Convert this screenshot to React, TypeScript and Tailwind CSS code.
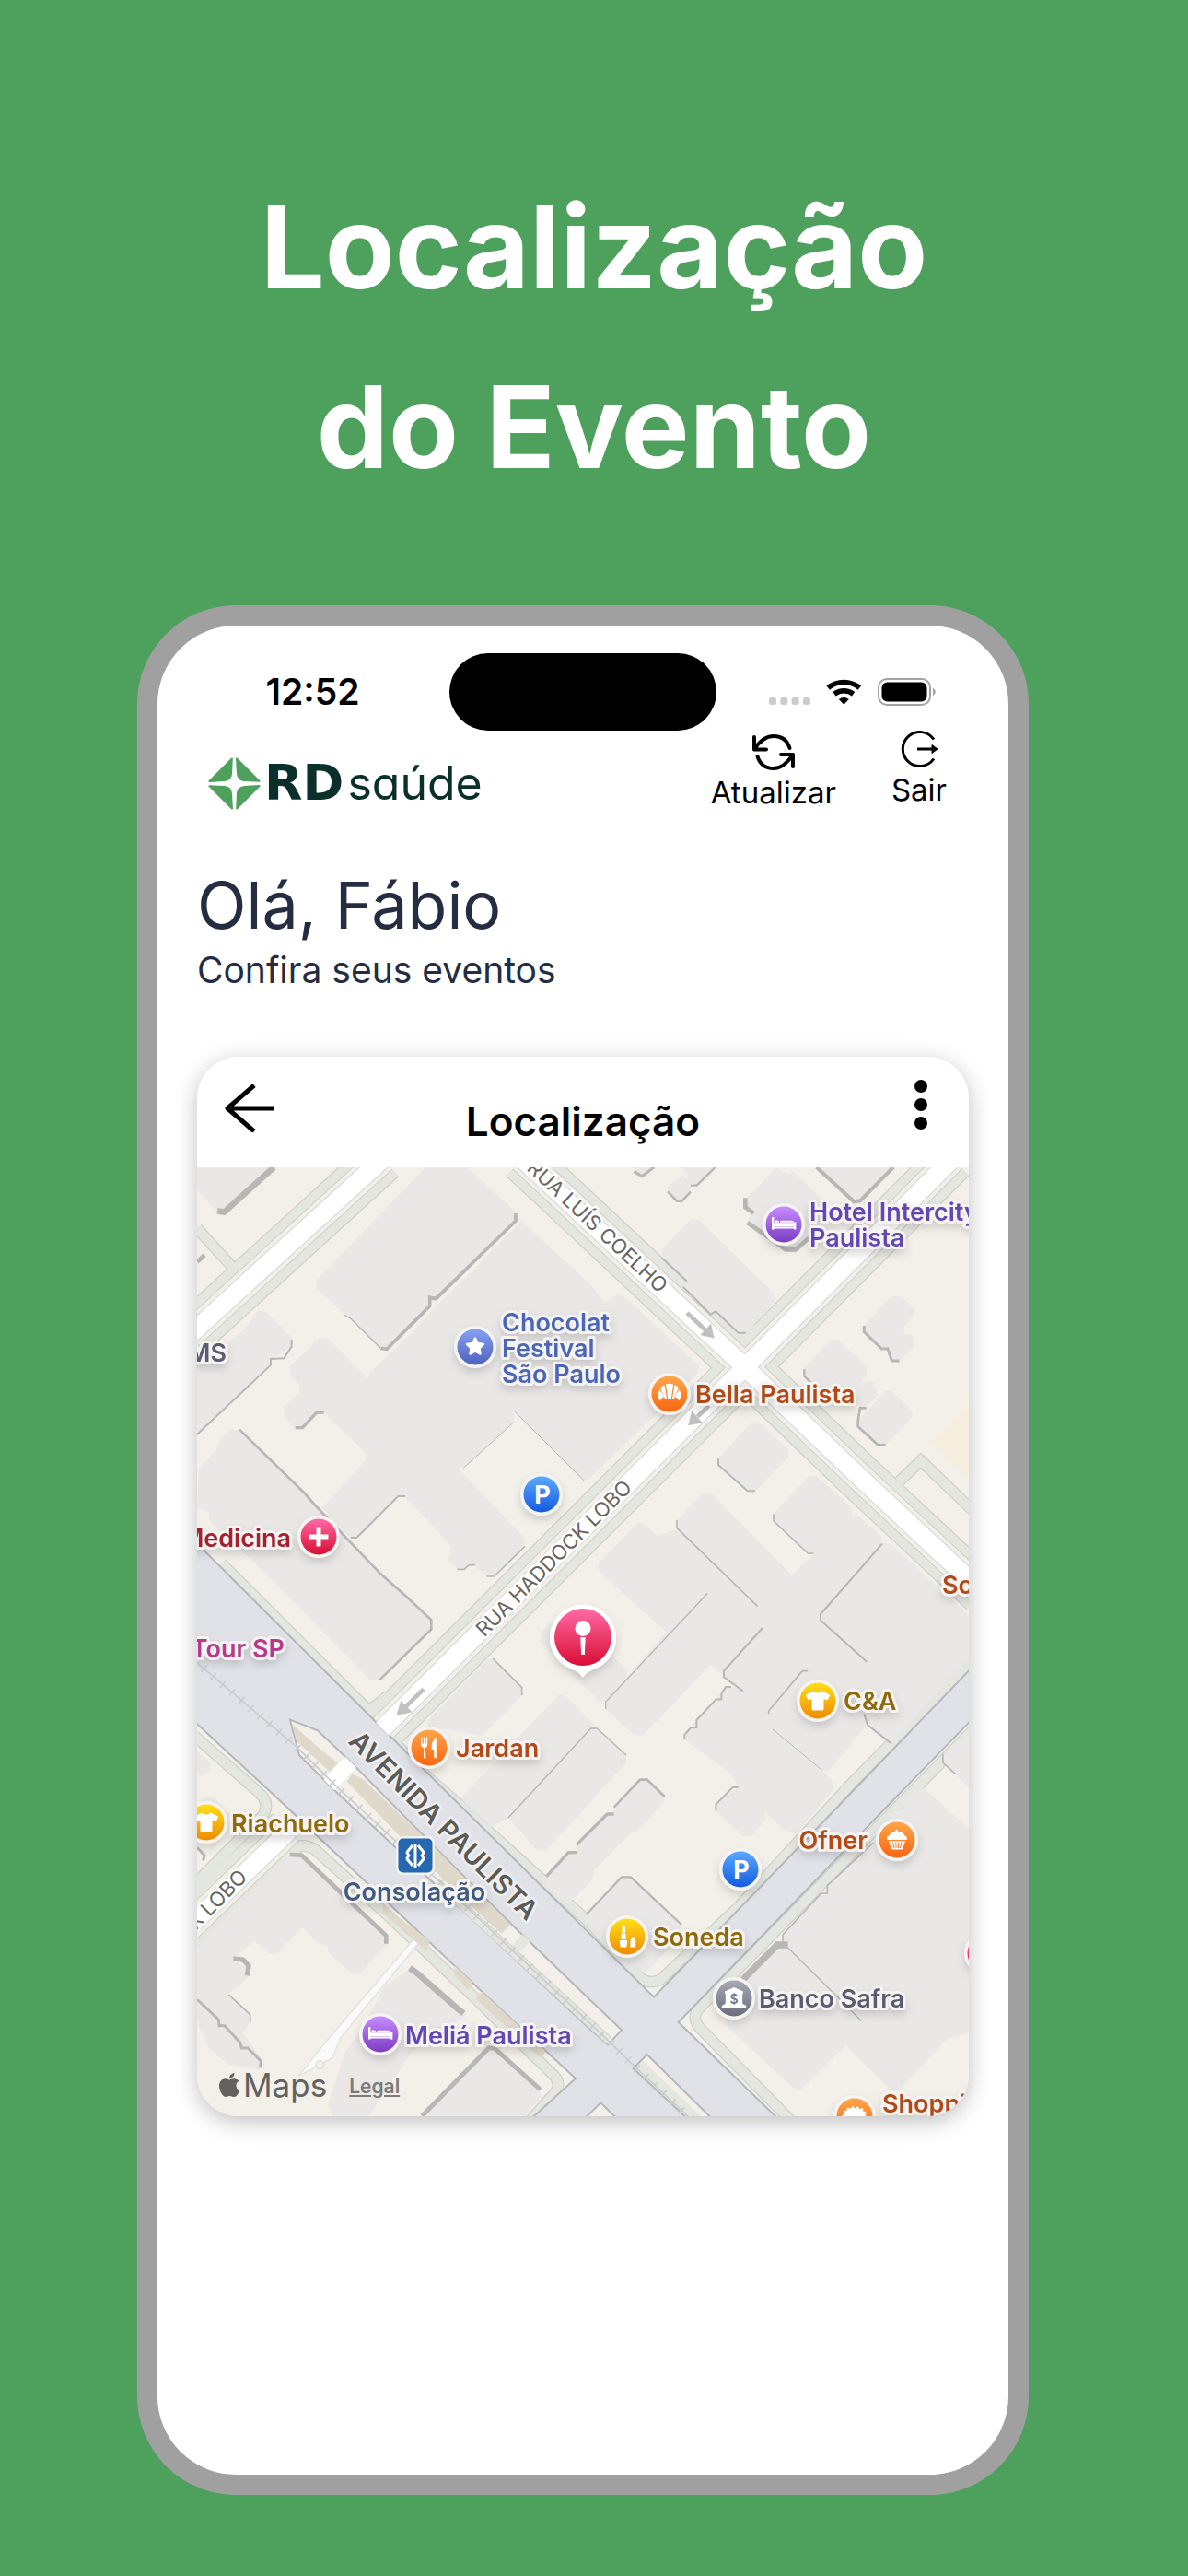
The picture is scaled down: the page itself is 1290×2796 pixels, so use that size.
import type { ReactNode } from 'react';
import { FaApple, FaStar, FaTshirt } from 'react-icons/fa';

type PinKind = 'blue' | 'purple' | 'orange' | 'red' | 'yellow' | 'parking' | 'gray';

interface Place {
  x: number;
  y: number;
  kind: PinKind;
  glyph: ReactNode;
  labelX?: number;
  labelY?: number;
  lines?: string[];
  anchor?: 'start' | 'end';
}

const pinColors: Record<PinKind, [string, string, string]> = {
  blue: ['#84a0f2', '#4e62c0', '#4b66b8'],
  purple: ['#c78bff', '#7b3cc4', '#6347b5'],
  orange: ['#ffa64a', '#fb6510', '#b24a17'],
  red: ['#ff6aa5', '#d80d33', '#a3202e'],
  yellow: ['#ffdf1a', '#ee8b00', '#8f6a0c'],
  parking: ['#5aa9ff', '#145ae0', '#145ae0'],
  gray: ['#a5a8b5', '#6b6d7c', '#5a5c72'],
};

const BedGlyph = () => (
  <g fill="#fff">
    <path d="M-13-8h2.400v10.500h21.200v-5H13.400V5.500H11V4.500h-21.600v1H-13z" />
    <path d="M-9.500-4.500h3a1.500 1.500 0 0 1 1.500 1.500v.8h-4.500zM-4-2.200c0-1.500.5-2 2-2H8.500c1.500 0 2.500.8 2.500 2z" />
    <path d="M-11-1.800h23v4h-23z" />
  </g>
);

const CroissantGlyph = () => (
  <g fill="#fff">
    <path d="M-4-10.500q4-1.500 8 0L1.800 6h-3.600z" />
    <path d="M-5.500-9.800-2.800 6h-1.800L-10-6.500q1.500-2.300 4.500-3.300z" />
    <path d="M5.500-9.800 2.800 6h1.800L10-6.500q-1.500-2.300-4.500-3.300z" />
    <path d="M-10.700-5-5.800 3q-3 1.400-4.600 4.200-3.800-5-.3-12.200z" />
    <path d="M10.700-5 5.800 3q3 1.400 4.600 4.200 3.800-5 .3-12.200z" />
  </g>
);

const ForkGlyph = () => (
  <g fill="#fff">
    <path d="M-9-11.500h1.400v7h1.400v-7h1.600v7h1.400v-7h1.400v8q0 2.500-2.300 3.500l.5 11.200h-2.500L-5.600 0Q-9-.8-9-3.500z" />
    <path d="M7.800-11.500v22.700H5.300L5.100 2H2.600q-.4-11 5.200-13.500z" />
  </g>
);

const CupcakeGlyph = () => (
  <g>
    <path d="M-10.500 0q-1.500-4 2.300-4.800Q-7-8.600-2.200-8.400L-.8-11.500 2.200-8.400Q7-8.600 8-4.800 12-4 10.500 0z" fill="#fff" />
    <path d="M-9 1.200H9L5.800 10.500H-5.800z" fill="#fff" />
    <path d="M-4.500 2.500-3 9M-1.200 2.500l.3 6.500M1.800 2.500 1.500 9M5 2.500 3.500 9" stroke="#fb7a22" />
  </g>
);

const LipstickGlyph = () => (
  <g fill="#fff">
    <path d="M-5.500-4v-6q.4-2.300 2-2.600L-2-10v6z" />
    <path d="M-6.500-3.200h5V3h-5zM-8 4h8v3L-.8 11.500h-6.500L-8 7zM3.500 11.500V4.500q2.800-8.500 5.800 0v7z" />
  </g>
);

const BankGlyph = () => (
  <g>
    <path d="M-10-7.500 0-12l10 4.500v2.300H9.200v11l4 2.200v2h-26.400v-2l4-2.200v-11H-10z" fill="#fff" />
    <text y="6" textAnchor="middle" className="fill-[#777988] text-[14px] font-semibold">$</text>
  </g>
);

const ParkingGlyph = () => (
  <text x="1" y="10" textAnchor="middle" className="fill-white text-[27px] font-bold">P</text>
);

const places: Place[] = [
  { x: 302, y: 195, kind: 'blue', glyph: <FaStar x="-11" y="-12" size={22} color="#fff" />, labelX: 331, labelY: 178, lines: ['Chocolat', 'Festival', 'São Paulo'] },
  { x: 637, y: 62, kind: 'purple', glyph: <BedGlyph />, labelX: 665, labelY: 58, lines: ['Hotel Intercity', 'Paulista'] },
  { x: 513, y: 246, kind: 'orange', glyph: <CroissantGlyph />, labelX: 541, labelY: 256, lines: ['Bella Paulista'] },
  { x: 374, y: 355, kind: 'parking', glyph: <ParkingGlyph /> },
  { x: 132, y: 401, kind: 'red', glyph: <path d="M0-10.500v21M-10.500 0h21" stroke="#fff" strokeWidth="5" />, labelX: 102, labelY: 412, lines: ['Medicina'], anchor: 'end' },
  { x: 674, y: 579, kind: 'yellow', glyph: <FaTshirt x="-13" y="-13" size={26} color="#fff" />, labelX: 702, labelY: 589, lines: ['C&A'] },
  { x: 252, y: 630, kind: 'orange', glyph: <ForkGlyph />, labelX: 281, labelY: 640, lines: ['Jardan'] },
  { x: 10, y: 711, kind: 'yellow', glyph: <FaTshirt x="-13" y="-13" size={26} color="#fff" />, labelX: 37, labelY: 722, lines: ['Riachuelo'] },
  { x: 199, y: 941, kind: 'purple', glyph: <BedGlyph />, labelX: 226, labelY: 952, lines: ['Meliá Paulista'] },
  { x: 760, y: 730, kind: 'orange', glyph: <CupcakeGlyph />, labelX: 728, labelY: 740, lines: ['Ofner'], anchor: 'end' },
  { x: 590, y: 762, kind: 'parking', glyph: <ParkingGlyph /> },
  { x: 467, y: 835, kind: 'yellow', glyph: <LipstickGlyph />, labelX: 495, labelY: 845, lines: ['Soneda'] },
  { x: 583, y: 902, kind: 'gray', glyph: <BankGlyph />, labelX: 610, labelY: 912, lines: ['Banco Safra'] },
  { x: 714, y: 1030, kind: 'orange', glyph: <path d="M-12 2q0-11 12-11t12 11z" fill="#fff" stroke="#fff" strokeWidth="3" strokeDasharray="3 2" />, labelX: 744, labelY: 1026, lines: ['Shopping'] },
  { x: 856, y: 853, kind: 'red', glyph: null },
];

const streets = [
  'M-30 551 605-27',
  'M1060-27 1785 651 2148 999 2560 1384',
  'M2460-27 1785 651 603 1829',
  'M-40 2487 300 2160',
];

const sidewalks = [
  'M0 199 115 325',
  'M80 1290 555 1765Q570 1765 620 1722',
  'M655 1872 650 1880 738 1974 858 2079 1278 2459 1450 2645Q1480 2660 1510 2645L1758 2414 2128 2010 2530 1603',
  'M2530 1830 1640 2735Q1605 2765 1640 2805L1940 3110',
  'M-10 1850 200 2035Q240 2070 215 2110L-10 2336',
  'M-10 2544 290 2222Q340 2195 385 2222L620 2435 900 2700 1165 2960Q1190 2990 1160 3020L1080 3110',
  'M2285 1025 2358 955 2530 1120',
  'M1740 490Q1775 560 1840 520',
];

const buildings = [
  '0,0 250,0 85,140 65,140 0,75',
  '743,0 878,0 1038,144 1038,174 778,424 758,449 618,589 598,589 388,394 388,369',
  '1058,174 1278,379 1328,439 1378,409 1633,644 1633,669 1273,1019 1253,1019 1033,794 1033,829 868,979 848,979 1068,1209 1068,1234 968,1332 943,1332 903,1294 848,1309 818,1279 828,1234 678,1074 653,1069 518,1206 498,1206 408,1109 548,954 548,929 413,799 388,799 343,849 318,849 283,809 283,779 333,734 333,709 303,674 303,649 398,554 423,554 558,689 563,669 703,534 758,474',
  '0,650 148,534 198,469 223,469 308,554 308,584 243,624 238,644 0,870',
  '6,979 68,914 73,889 108,854 138,854 348,1059 388,1104 598,1324 678,1394 763,1474 763,1504 593,1669 563,1669 358,1459 188,1289 38,1149 38,1124 0,1109',
  '1513,269 1608,169 1633,169 1883,414 1883,439 1788,539 1763,539 1688,469 1673,479 1583,389 1596,371 1513,294',
  '1783,109 1888,0 1928,24 1943,14 2028,94 2028,200 1958,269 1918,269 1793,174 1813,144 1783,129',
  '2018,0 2268,0 2158,109 2138,109',
  '1533,64 1583,24 1608,49 1608,74 1578,109 1563,109 1533,79',
  '1583,0 1688,0 1628,59 1608,59',
  '1423,0 1488,0 1453,29 1428,24',
  '2173,514 2263,419 2293,419 2338,459 2338,479 2303,519 2303,544 2328,544 2338,559 2338,584 2288,629 2263,629 2248,589 2228,589 2173,534',
  '1978,654 2063,562 2088,562 2181,649 2181,679 2090,770 1978,679',
  '2150,700 2200,697 2218,740 2180,784 2163,784 2130,750',
  '2153,824 2243,729 2263,729 2330,794 2330,814 2243,904 2218,904 2153,844',
  '1698,949 1808,829 1828,829 1926,919 1926,944 1818,1054 1793,1054 1698,969',
  '1308,1289 1433,1159 1453,1159 1498,1199 1563,1179 1563,1149 1648,1061 1673,1061 1938,1329 2008,1259 1988,1259 1878,1154 1878,1129 1993,1004 2018,1004 2133,1109 2133,1134 2158,1137 2230,1204 2230,1224 2258,1224 2514,1459 2514,1599 2258,1874 2183,1814 2058,1964 2038,1964 2070,1999 2070,2029 1953,2169 1918,2164 1848,2099 1853,2124 1803,2179 1778,2179 1688,2094 1688,2069 1763,2019 1738,1974 1588,1864 1588,1844 1628,1799 1728,1689 1778,1699 1718,1659 1673,1619 1453,1849 1423,1849 1331,1764 1331,1739 1528,1514 1308,1314',
  '1118,1520 1150,1480 1300,1540 1403,1639 1403,1660 1330,1739 1310,1739 1118,1545',
  '753,1799 948,1599 963,1599 1058,1694 1058,1719 930,1850 753,1820',
  '863,2049 1178,1719 1198,1719 1278,1799 1303,1827 1398,1914 1398,1939 1138,2224 1108,2224 1013,2119 958,2149 863,2060',
  '1138,2309 1208,2229 1236,2229 1236,2204 1336,2104 1358,2104 1358,2084 1443,1992 1466,1992 1523,2049 1523,2065 1433,2164 1413,2169 1293,2289 1290,2319 1213,2394 1193,2394 1138,2339',
  '1268,2429 1383,2309 1413,2309 1578,2464 1578,2489 1468,2619 1448,2619 1268,2454',
  '1718,2789 1778,2639 1888,2524 1908,2524 1908,2499 2033,2364 2053,2364 2053,2339 2203,2199 2278,2094 2303,2089 2303,2064 2348,2022 2368,2022 2514,2154 2514,2819 2443,2839 2288,3004 2258,3004 2113,2859 1968,3004 1948,3004',
  '2430,1919 2468,1879 2514,1850 2514,2019 2430,1939',
  '298,2234 338,2234 618,2499 618,2529 533,2624 503,2624 428,2559 428,2534 398,2529 343,2474 263,2559 238,2559 183,2519 118,2579 163,2609 163,2639 103,2694 173,2759 173,2784 148,2819 208,2899 203,2939 98,2919 38,2869 0,2779 0,2539',
  '693,2609 848,2739 878,2759 700,2880 560,3089 438,3089 428,3049 478,2889 548,2789 608,2669',
  '733,3089 948,2864 968,2864 1118,2999 1118,3029 1068,3089',
  '0,1899 43,1939 43,1964 18,1984 0,1975',
  '18,2049 53,2049 108,2110 60,2180 0,2180',
];

// building walls: [points, thickness]
const walls: [string, number][] = [
  ['250,0 88,146 66,142', 20],
  ['0,308 24,286', 14],
  ['1038,150 1038,174 778,428 758,424 758,452 618,592 598,589', 11],
  ['598,589 500,492 478,480', 4],
  ['308,560 308,584 283,622 240,624 240,644 0,870', 6],
  ['413,798 390,798 343,848 320,848', 10],
  ['868,979 1033,829', 3],
  ['1033,794 1260,1019', 3],
  ['138,854 348,1059 388,1104 598,1324 678,1394 763,1474 763,1504 595,1669', 8],
  ['678,1071 655,1071 520,1206 500,1206', 6],
  ['1068,1234 968,1332 943,1332', 5],
  ['906,1294 884,1296 870,1309 848,1309', 5],
  ['1513,294 1596,371', 6],
  ['1583,389 1673,479 1690,469 1763,539 1788,539', 6],
  ['1786,100 1786,130 1813,150', 14],
  ['1793,180 1918,268 1950,268 2028,200', 14],
  ['2018,0 2140,112 2160,109 2268,0', 12],
  ['1533,79 1563,110 1580,109 1608,80', 8],
  ['1608,59 1628,59 1688,0', 7],
  ['1423,14 1450,29 1488,0', 9],
  ['2173,516 2173,536 2230,591 2250,591 2263,630 2288,630', 9],
  ['1978,658 1978,680 2045,745', 7],
  ['2180,784 2160,784 2153,824 2153,844 2218,904 2243,904', 8],
  ['1698,949 1698,969 1793,1054 1818,1054', 6],
  ['1563,1149 1563,1174 1826,1430', 5],
  ['1663,1387 1331,1741 1331,1764', 4],
  ['2232,1226 2031,1455 2031,1475 2182,1610', 6],
  ['1842,1500 1716,1640 1716,1660 1778,1705', 6],
  ['1740,1692 1722,1692 1708,1715 1708,1732 1690,1733 1627,1800 1627,1824 1608,1825 1588,1848 1588,1864', 6],
  ['1990,1640 1972,1640 1862,1770 1862,1780', 5],
  ['1875,1830 2035,1962', 3],
  ['1878,1129 1878,1152 1990,1257 2008,1257', 5],
  ['2173,1780 2185,1817 2260,1875', 6],
  ['1763,2019 1745,2019 1690,2075 1690,2095', 6],
  ['963,1599 1058,1694 1058,1719', 5],
  ['1398,1914 1303,1827 1283,1827 1013,2119', 4],
  ['1138,2309 1210,2231 1236,2231', 10],
  ['1236,2206 1336,2106 1358,2106', 10],
  ['1358,2084 1443,1994 1466,1994 1523,2049', 8],
  ['1268,2433 1383,2311 1413,2311 1578,2466', 7],
  ['1778,2645 1890,2532 1925,2532', 22],
  ['1908,2524 1908,2499 2033,2364 2053,2364 2053,2339 2203,2199', 5],
  ['1912,2528 2165,2780', 4],
  ['2430,1910 2430,1939 2470,1975', 5],
  ['302,2238 340,2240 616,2502 616,2528', 14],
  ['118,2577 150,2580 168,2600 163,2632', 16],
  ['0,2710 70,2775 72,2795 90,2795 140,2850 145,2868 165,2868 208,2910 206,2932', 9],
  ['103,2694 173,2759 173,2784', 5],
  ['693,2607 718,2625 848,2739 868,2755', 20],
  ['733,3089 950,2868 968,2868 1118,3003', 15],
  ['0,2215 24,2240 20,2258', 9],
];

const avenue =
  'M-20 1205 583 1807 1488 2702 2148 2019 2540 1612V1782L2308 2019 1568 2784 1910 3115H1070L1233 2967 928 2684 388 2174 288 2079-20 1794Z';

function Terrain() {
  return (
    <g transform="scale(.33333)" fill="none">
      <path d="M2393 894 2514 769V1009Z" fill="#f5eddd" />

      <g stroke="#cfcec5">
        {sidewalks.map((d) => <path key={d} d={d} strokeWidth="38" />)}
        {streets.map((d) => <path key={d} d={d} strokeWidth="156" />)}
      </g>
      <g stroke="#e4e6e0">
        {sidewalks.map((d) => <path key={d} d={d} strokeWidth="31" />)}
        {streets.map((d) => <path key={d} d={d} strokeWidth="149" />)}
      </g>
      <g stroke="#cfcec5">
        {streets.map((d) => <path key={d} d={d} strokeWidth="94" />)}
      </g>
      <g stroke="#f3f0e9">
        {streets.map((d) => <path key={d} d={d} strokeWidth="88" />)}
      </g>

      <g fill="#e9e8e6">
        {buildings.map((points) => <polygon key={points} points={points} />)}
      </g>
      <g stroke="#b9b7b6">
        {walls.map(([points, width]) => <polyline key={points} points={points} strokeWidth={width} />)}
      </g>

      <g stroke="#d9dbdc">
        {streets.map((d) => <path key={d} d={d} strokeWidth="66" />)}
      </g>
      <path d="M752 2490 470 2830 440 2900 330 2960 430 2835 730 2485Z" fill="#fafafa" stroke="#e3e3e1" strokeWidth="4" />

      <path d={avenue} fill="#e0e2e7" stroke="#b4b7bc" strokeWidth="6" />

      <g stroke="#fff">
        {streets.map((d) => <path key={d} d={d} strokeWidth="58" />)}
      </g>
      <circle cx="400" cy="2922" r="13" fill="#f3f0e9" stroke="#dcdcd8" strokeWidth="4" />

      {/* tree strips beside the lower lane */}
      <g fill="#dfd9cb">
        <path d="M608 2405 760 2520 745 2550 600 2425ZM838 2599 898 2655 883 2680 838 2630ZM928 2684 1133 2875Q1135 2900 1110 2895L908 2708Z" />
      </g>

      {/* central median */}
      <path
        d="M303 1799 393 1834 483 1919 1023 2464 1278 2709 1383 2809 1338 2857 1278 2804 758 2319 448 2029 333 1914Z"
        fill="#f3f0e9"
        stroke="#b4b7bc"
        strokeWidth="6"
      />
      <path d="M309 1812 385 1880 458 1940 432 1968 325 1870ZM505 1975 540 1992 770 2210 1020 2466 992 2495 940 2450 720 2240 488 2000Z" fill="#dfd9cb" />
      <path d="M780 2328 1340 2842" stroke="#cfcec5" strokeWidth="28" />
      <path d="M780 2328 1340 2842" stroke="#e4e6e0" strokeWidth="23" />
      <path d="M1040 2545 1072 2508" stroke="#e4e6e0" strokeWidth="34" />
      <path d="M483 1919 518 1954 448 2029 413 1994Z" fill="#fff" />
      <path d="M1466 2889 1690 3110H1610L1421 2934Z" fill="#f3f0e9" stroke="#b4b7bc" strokeWidth="6" />
      <path d="M1440 2920 1640 3110" stroke="#e4e6e0" strokeWidth="32" />
      <path d="M1315 3046 1250 3110H1380Z" fill="#f3f0e9" stroke="#b4b7bc" strokeWidth="6" />

      {/* metro track */}
      <path d="M-10 1605 323 1886 458 2020 800 2335 1338 2842 1421 2924 1620 3110" stroke="#cbccce" strokeWidth="5" />
      <path d="M-10 1605 323 1886 458 2020 800 2335 1338 2842 1421 2924 1620 3110" stroke="#cbccce" strokeWidth="28" strokeDasharray="5 35" />

      <g stroke="#c0c0c0" strokeWidth="14" fill="#c0c0c0">
        <path d="M1596 474 1656 530" />
        <path d="M1684 556 1640 546 1674 510Z" strokeWidth="1" />
        <path d="M1668 776 1630 812" />
        <path d="M1600 840 1612 794 1646 832Z" strokeWidth="1" />
        <path d="M738 1699 676 1760" />
        <path d="M650 1784 664 1738 700 1774Z" strokeWidth="1" />
      </g>
    </g>
  );
}

function PlacePin({ place }: { place: Place }) {
  const textColor = pinColors[place.kind][2];

  return (
    <g>
      {place.lines && (
        <text
          x={place.labelX}
          y={place.labelY}
          textAnchor={place.anchor ?? 'start'}
          fill={textColor}
          stroke="#f5f4f2"
          strokeWidth="6"
          strokeLinejoin="round"
          paintOrder="stroke"
          filter="url(#label-shadow)"
          className="text-[27px] font-semibold"
        >
          {place.lines.map((line, i) => (
            <tspan key={line} x={place.labelX} dy={i === 0 ? 0 : 28}>{line}</tspan>
          ))}
        </text>
      )}
      <g transform={`translate(${place.x} ${place.y})`}>
        <circle r="23" fill="#f5f4f3" filter="url(#label-shadow)" />
        <circle r="19.500" fill={`url(#pin-${place.kind})`} />
        {place.glyph}
      </g>
    </g>
  );
}

function EventMap() {
  return (
    <svg viewBox="0 0 838 1030" className="block h-auto w-full bg-[#f3f0e9]" role="img" aria-label="Mapa">
      <defs>
        {Object.entries(pinColors).map(([kind, [from, to]]) => (
          <linearGradient key={kind} id={`pin-${kind}`} x1="0" y1="0" x2="0" y2="1">
            <stop offset="0" stopColor={from} />
            <stop offset="1" stopColor={to} />
          </linearGradient>
        ))}
        <filter id="label-shadow" x="-30%" y="-50%" width="160%" height="220%">
          <feDropShadow dx="0" dy="5" stdDeviation="5" floodColor="#000" floodOpacity=".15" />
        </filter>
      </defs>

      <Terrain />

      <g
        textAnchor="middle"
        dominantBaseline="central"
        fill="#666563"
        stroke="#fff"
        strokeWidth="5"
        strokeLinejoin="round"
        paintOrder="stroke"
        className="text-[22px]"
      >
        <text transform="translate(435 64) rotate(43)">RUA LUÍS COELHO</text>
        <text transform="translate(387 424) rotate(-45)">RUA HADDOCK LOBO</text>
        <text transform="translate(50 766) rotate(-45)" textAnchor="end">HADDOCK LOBO</text>
        <text transform="translate(268 714) rotate(45)" fill="#5c5b58" stroke="#f0f0f0" className="text-[29px] font-semibold">
          AVENIDA PAULISTA
        </text>
      </g>

      <g
        stroke="#f5f4f2"
        strokeWidth="6"
        strokeLinejoin="round"
        paintOrder="stroke"
        filter="url(#label-shadow)"
        className="text-[27px] font-semibold"
      >
        <text x="32" y="211" textAnchor="end" fill="#5a5c72">MS</text>
        <text x="95" y="532" textAnchor="end" fill="#b8398a">Tour SP</text>
        <text x="809" y="463" fill="#b24a17">So</text>
        <text x="236" y="796" textAnchor="middle" fill="#415a80">Consolação</text>
      </g>

      {places.map((place) => (
        <PlacePin key={`${place.x}-${place.y}`} place={place} />
      ))}

      {/* metro station */}
      <g transform="translate(237 747)">
        <rect x="-21" y="-21" width="42" height="42" rx="7" fill="#f2f2f0" />
        <rect x="-18.500" y="-18.500" width="37" height="37" rx="5" fill="#2568b2" />
        <path d="M-3-11-9.500-3M-9.500 3-3 11M3-11 9.500-3M9.500 3 3 11M-9.500-3.500-7 0-9.500 3.500M9.500-3.500 7 0 9.500 3.500M0-13V13" fill="none" stroke="#fff" strokeWidth="3" />
      </g>

      {/* event marker */}
      <g transform="translate(419 510)">
        <path d="M0 44C-4 37-10 36-16 33A36 36 0 1 1 16 33C10 36 4 37 0 44Z" fill="#fff" filter="url(#label-shadow)" />
        <circle r="31" fill="url(#pin-red)" />
        <circle cy="-9.500" r="8.500" fill="#fff" />
        <path d="M-2.800 0h5.600L1.800 19h-3.600z" fill="#fff" />
      </g>
    </svg>
  );
}

function StatusIcons() {
  return (
    <svg viewBox="0 0 181 30" className="h-[30px] w-[181px]" aria-hidden="true">
      <g fill="#ccc">
        <rect y="21" width="8" height="8" rx="2.500" />
        <rect x="12.300" y="21" width="8" height="8" rx="2.500" />
        <rect x="24.600" y="21" width="8" height="8" rx="2.500" />
        <rect x="37" y="21" width="8" height="8" rx="2.500" />
      </g>
      <g fill="none" stroke="#000" strokeWidth="5.500">
        <path d="M64.200 10.500a27 27 0 0 1 34.200 0" />
        <path d="M71 17.300a17 17 0 0 1 20.600 0" />
      </g>
      <path d="M81.300 28.700 75.800 23q5.500-4 11 0z" />
      <rect x="119" y="1" width="56" height="28" rx="9" fill="none" stroke="#a3a3a3" strokeWidth="2" />
      <rect x="122.500" y="4.500" width="49" height="21" rx="6" />
      <path d="M178 10.500q5.500 4.500 0 9z" fill="#a3a3a3" />
    </svg>
  );
}

function Logo() {
  return (
    <div className="flex items-center gap-1 pt-7 text-[#0b302c]">
      <svg viewBox="0 0 57 57" className="size-[57px]" fill="#4da15d" aria-hidden="true">
        {[0, 90, 180, 270].map((angle) => (
          <path
            key={angle}
            transform={`rotate(${angle} 28.500 28.500)`}
            d="M26.800 1.500Q26.600-.5 25 1L1 25Q-.5 26.700 1.500 26.900L18 26Q25.500 25 26 18Z"
          />
        ))}
      </svg>
      <div className="flex items-baseline gap-1 leading-[57px]">
        <span className="font-['DejaVu_Sans'] text-[54px] font-bold">RD</span>
        <span className="text-[50px] [font-feature-settings:'cv11']">saúde</span>
      </div>
    </div>
  );
}

export default function App() {
  return (
    <main className="flex min-h-screen flex-col bg-[#4da15d] pt-[171px] pb-[88px] font-['Inter','Liberation_Sans',sans-serif]">
      <h1 className="text-center text-[124px] leading-[195px] font-bold text-white">
        Localização
        <br />
        do Evento
      </h1>

      <section className="mt-24 mr-[173px] ml-[149px] flex-1 rounded-[107px] border-[22px] border-[#a0a0a0] bg-white text-black">
        <div className="mt-[30px] grid grid-cols-[1fr_290px_1fr] items-center">
          <time className="pl-5 text-center text-[39px] font-semibold">12:52</time>
          <div className="h-[84px] rounded-full bg-black" />
          <div className="flex justify-end pr-[79px]">
            <StatusIcons />
          </div>
        </div>

        <header className="flex items-start justify-between pr-[67px] pl-[55px]">
          <Logo />
          <div className="flex items-start gap-[60px] text-[33px] leading-10">
            <button type="button" className="flex flex-col items-center gap-1 pt-[3px]">
              <svg viewBox="0 0 48 40" className="h-10 w-12" fill="none" stroke="#000" strokeWidth="4" strokeLinecap="round" strokeLinejoin="round">
                <path d="M3 4v13.500h13M3 17.500C9 8 15 3 24 3c9 0 15 5 17.500 13" />
                <path d="M45 36V23H32M45 23C39 32 33 38 24 38 15 38 9 33 6.500 25" />
              </svg>
              Atualizar
            </button>
            <button type="button" className="flex flex-col items-center gap-1">
              <svg viewBox="0 0 40 40" className="size-10" fill="none" stroke="#000" strokeWidth="3">
                <path d="M36 9.500A18.500 18.500 0 1 0 36 30.500M18 20h17" />
                <path d="M34 15.500 40 20 34 24.500Z" fill="#000" strokeWidth="1" />
              </svg>
              Sair
            </button>
          </div>
        </header>

        <div className="px-[43px] pt-[58px] text-[#242d42]">
          <h2 className="text-[70px] leading-[90px]">Olá, Fábio</h2>
          <p className="text-[39px] leading-[50px]">Confira seus eventos</p>

          <article className="relative mt-[69px] overflow-hidden rounded-[45px] bg-white text-black shadow-[0_6px_24px_rgba(0,0,0,0.25)]">
            <div className="grid h-[120px] grid-cols-[1fr_auto_1fr] items-start">
              <button type="button" aria-label="Voltar" className="mt-[30px] ml-[28px] justify-self-start">
                <svg viewBox="0 0 56 52" className="h-[52px] w-14" fill="none" stroke="#000" strokeWidth="5">
                  <path d="M55 26H4M34 1 5 26 34 51" strokeLinejoin="round" />
                </svg>
              </button>
              <h3 className="pt-[43px] text-[44px] leading-[54px] font-semibold">Localização</h3>
              <button type="button" aria-label="Mais opções" className="mt-[25px] mr-[45px] justify-self-end">
                <svg viewBox="0 0 14 54" className="h-[54px] w-3.5">
                  <circle cx="7" cy="7" r="7" />
                  <circle cx="7" cy="27" r="7" />
                  <circle cx="7" cy="47" r="7" />
                </svg>
              </button>
            </div>

            <EventMap />

            <div className="absolute bottom-3 left-5 flex items-center gap-6 text-[#636260]">
              <span className="flex items-center text-[35px] leading-[44px]">
                <FaApple className="size-[30px]" />
                Maps
              </span>
              <a href="#legal" className="pt-1 text-[21px] font-semibold text-[#7c7b79] underline">Legal</a>
            </div>
          </article>
        </div>
      </section>
    </main>
  );
}
